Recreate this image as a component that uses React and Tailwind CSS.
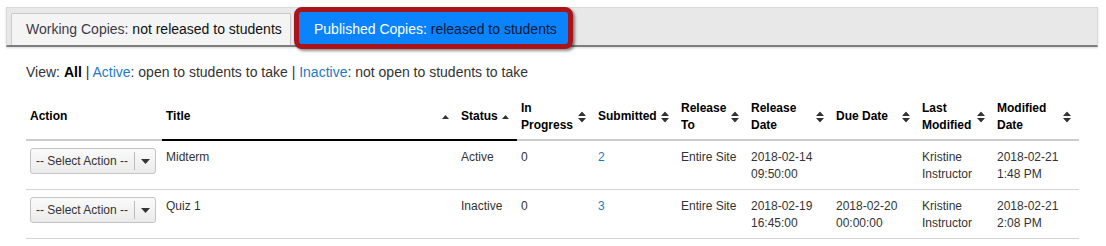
import React from 'react';

const COLUMNS = [
  { key: 'action', lines: ['Action'], width: 'w-[136px]' },
  { key: 'title', lines: ['Title'], width: 'w-[295px]', sort: 'asc', active: true },
  { key: 'status', lines: ['Status'], width: 'w-[60px]', sort: 'asc', active: true },
  { key: 'progress', lines: ['In', 'Progress'], width: 'w-[77px]', sort: 'both' },
  { key: 'submitted', lines: ['Submitted'], width: 'w-[83px]', sort: 'both' },
  { key: 'releaseTo', lines: ['Release', 'To'], width: 'w-[70px]', sort: 'both' },
  { key: 'releaseDate', lines: ['Release', 'Date'], width: 'w-[85px]', sort: 'both' },
  { key: 'dueDate', lines: ['Due Date'], width: 'w-[86px]', sort: 'both' },
  { key: 'lastModified', lines: ['Last', 'Modified'], width: 'w-[75px]', sort: 'both' },
  { key: 'modifiedDate', lines: ['Modified', 'Date'], width: 'w-[86px]', sort: 'both' },
];

const ROWS = [
  {
    title: 'Midterm',
    status: 'Active',
    progress: '0',
    submitted: '2',
    releaseTo: 'Entire Site',
    releaseDate: ['2018-02-14', '09:50:00'],
    dueDate: null,
    lastModified: ['Kristine', 'Instructor'],
    modifiedDate: ['2018-02-21', '1:48 PM'],
  },
  {
    title: 'Quiz 1',
    status: 'Inactive',
    progress: '0',
    submitted: '3',
    releaseTo: 'Entire Site',
    releaseDate: ['2018-02-19', '16:45:00'],
    dueDate: ['2018-02-20', '00:00:00'],
    lastModified: ['Kristine', 'Instructor'],
    modifiedDate: ['2018-02-21', '2:08 PM'],
  },
];

function SortIcon({ dir }) {
  if (dir === 'asc') {
    return (
      <svg width="7" height="4" viewBox="0 0 7 4" className="fill-[#333]">
        <path d="M0 4L3.5 0L7 4Z" />
      </svg>
    );
  }
  return (
    <svg width="8" height="11" viewBox="0 0 8 11" className="fill-[#333]">
      <path d="M0 4.5L4 0L8 4.5ZM0 6.5L8 6.5L4 11Z" />
    </svg>
  );
}

function SelectAction() {
  return (
    <div className="flex items-center w-[126px] h-[26px] border border-[#c4c4c4] rounded-[3px] bg-gradient-to-b from-[#fafafa] to-[#ebebeb] text-[12px] text-[#333]">
      <span className="pl-[5px] whitespace-nowrap">-- Select Action --</span>
      <span className="ml-auto w-px h-[18px] bg-[#bdbdbd]" />
      <span className="w-[20px] flex items-center justify-center">
        <svg width="9" height="5" viewBox="0 0 9 5" className="fill-[#333]">
          <path d="M0 0L9 0L4.5 5Z" />
        </svg>
      </span>
    </div>
  );
}

function Lines({ value }) {
  if (!value) return null;
  if (Array.isArray(value)) {
    return value.map((l, i) => <div key={i} className="whitespace-nowrap">{l}</div>);
  }
  return <span className="whitespace-nowrap">{value}</span>;
}

function TabBar() {
  return (
    <div className="ml-[6px] mt-[7px] w-[1092px] h-[40px] flex items-end pl-[4px] bg-[#e8e8e8] border border-[#d8d8d8] border-b-2 border-b-[#7d7d7d] shadow-[0_1px_2px_rgba(0,0,0,0.15)]">
      <div className="h-[32px] w-[280px] pl-[14px] flex items-center bg-[#f4f4f4] border border-b-0 border-[#c9c9c9] rounded-t-[2px] text-[14px] whitespace-nowrap">
        <span className="text-[#3b3b48]">Working Copies:</span>
        <span className="text-[#111]">&nbsp;not released to students</span>
      </div>
      <div className="relative z-10 ml-[3px] -mb-[4px] h-[42px] w-[279px] self-end flex items-center pl-[15px] pt-[2px] border-[5px] border-[#a8141a] rounded-[8px] bg-[#0a83fc] shadow-[2px_2px_3px_rgba(0,0,0,0.45)] text-[14px] whitespace-nowrap">
        <span className="text-white">Published Copies:</span>
        <span className="text-[#0b1838]">&nbsp;released to students</span>
      </div>
    </div>
  );
}

function ViewFilter() {
  return (
    <div className="ml-[26px] mt-[15px] text-[14px] leading-[20px] text-[#333]">
      View: <b className="text-black">All</b> | <span className="text-[#1f7bc1]">Active</span>: open to students to take |{' '}
      <span className="text-[#1f7bc1]">Inactive</span>: not open to students to take
    </div>
  );
}

function AssessmentTable() {
  return (
    <table className="ml-[26px] mt-[12px] w-[1053px] table-fixed border-collapse text-[12px] leading-[17px]">
      <colgroup>
        {COLUMNS.map(c => (
          <col key={c.key} className={c.width} />
        ))}
      </colgroup>
      <thead>
        <tr>
          {COLUMNS.map(c => (
            <th
              key={c.key}
              className={`relative text-left align-middle font-bold text-black pl-[4px] pr-[18px] py-[5px] h-[46px] border-b-2
                          ${c.active ? 'border-b-black' : 'border-b-[#cccccc]'}`}
            >
              {c.lines.map((l, i) => (
                <div key={i} className="whitespace-nowrap">{l}</div>
              ))}
              {c.sort && (
                <span className="absolute right-[8px] top-1/2 -translate-y-1/2 flex">
                  <SortIcon dir={c.sort} />
                </span>
              )}
            </th>
          ))}
        </tr>
      </thead>
      <tbody>
        {ROWS.map((row, i) => (
          <tr key={i} className="border-b border-[#d4d4d4] text-[#333]">
            <td className="align-top pl-[4px] pt-[7px] pb-[6px]">
              <SelectAction />
            </td>
            <td className="align-top pl-[4px] pt-[8px] pb-[6px]">{row.title}</td>
            <td className="align-top pl-[4px] pt-[8px] pb-[6px]">{row.status}</td>
            <td className="align-top pl-[4px] pt-[8px] pb-[6px]">{row.progress}</td>
            <td className="align-top pl-[4px] pt-[8px] pb-[6px] text-[#1f7bc1]">{row.submitted}</td>
            <td className="align-top pl-[4px] pt-[8px] pb-[6px]"><Lines value={row.releaseTo} /></td>
            <td className="align-top pl-[4px] pt-[8px] pb-[6px]"><Lines value={row.releaseDate} /></td>
            <td className="align-top pl-[4px] pt-[8px] pb-[6px]"><Lines value={row.dueDate} /></td>
            <td className="align-top pl-[4px] pt-[8px] pb-[6px]"><Lines value={row.lastModified} /></td>
            <td className="align-top pl-[4px] pt-[8px] pb-[6px]"><Lines value={row.modifiedDate} /></td>
          </tr>
        ))}
      </tbody>
    </table>
  );
}

export default function App() {
  return (
    <div className="w-[1106px] h-[246px] overflow-hidden bg-white font-['Liberation_Sans',Arial,sans-serif]">
      <TabBar />
      <ViewFilter />
      <AssessmentTable />
    </div>
  );
}
